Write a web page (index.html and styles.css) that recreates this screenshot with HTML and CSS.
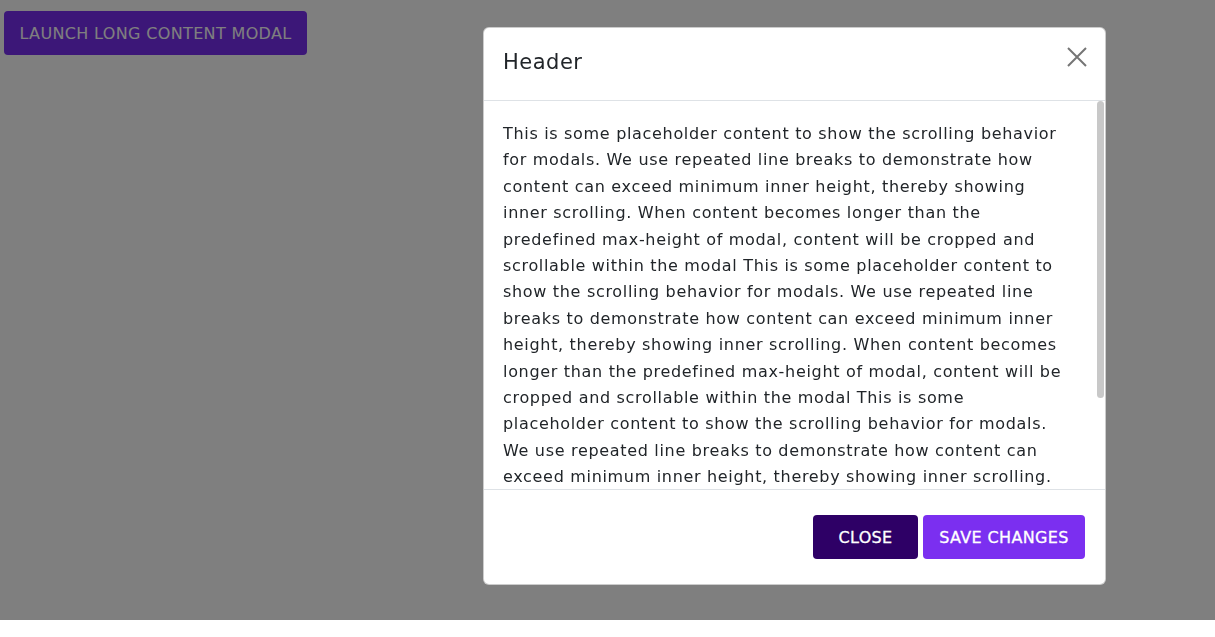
FILE: index.html
```html
<!DOCTYPE html>
<html lang="en">
<head>
<meta charset="utf-8">
<title>Long content modal</title>
<link rel="stylesheet" href="styles.css">
</head>
<body>
<div class="page">
  <button class="btn btn-launch" type="button">Launch long content modal</button>
</div>
<div class="backdrop">
  <div class="modal">
    <div class="modal-header">
      <h5 class="modal-title">Header</h5>
      <button class="btn-close" type="button" aria-label="Close">
        <svg width="20" height="20" viewBox="0 0 20 20"><path d="M1 1 L19 19 M19 1 L1 19" stroke="#757575" stroke-width="2" fill="none"/></svg>
      </button>
    </div>
    <div class="modal-body-wrap">
      <div class="modal-body">
        <p>This is some placeholder content to show the scrolling behavior for modals. We use repeated line breaks to demonstrate how content can exceed minimum inner height, thereby showing inner scrolling. When content becomes longer than the predefined max-height of modal, content will be cropped and scrollable within the modal This is some placeholder content to show the scrolling behavior for modals. We use repeated line breaks to demonstrate how content can exceed minimum inner height, thereby showing inner scrolling. When content becomes longer than the predefined max-height of modal, content will be cropped and scrollable within the modal This is some placeholder content to show the scrolling behavior for modals. We use repeated line breaks to demonstrate how content can exceed minimum inner height, thereby showing inner scrolling. When content becomes longer than the predefined max-height of modal, content will be cropped and scrollable within the modal</p>
      </div>
      <div class="scroll-thumb" aria-hidden="true"></div>
    </div>
    <div class="modal-footer">
      <button class="btn btn-close-modal" type="button">Close</button>
      <button class="btn btn-save" type="button">Save changes</button>
    </div>
  </div>
</div>
</body>
</html>
```
FILE: styles.css
```css
* { box-sizing: border-box; }
html, body { margin: 0; padding: 0; }
body {
  background: #ffffff;
  font-family: "DejaVu Sans", "Liberation Sans", sans-serif;
  color: #212529;
  height: 637px;
  overflow: hidden;
}
.page {
  padding: 11px 4px;
}
.btn {
  font-family: inherit;
  font-size: 16px;
  letter-spacing: 0.35px;
  text-transform: uppercase;
  border: 0;
  border-radius: 4px;
  height: 44px;
  color: #ffffff;
  cursor: pointer;
  padding: 0;
}
.btn-launch {
  width: 303px;
  background: #782ef0;
  font-weight: 400;
}
.backdrop {
  position: fixed;
  top: 0;
  left: 0;
  width: 100%;
  height: 620px;
  background: rgba(0, 0, 0, 0.5);
  padding: 27px 109px 35px 483px;
}
.modal {
  width: 623px;
  height: 558px;
  background: #ffffff;
  border: 1px solid rgba(0, 0, 0, 0.2);
  border-radius: 6px;
  display: flex;
  flex-direction: column;
  overflow: hidden;
}
.modal-header {
  height: 73px;
  flex: none;
  display: flex;
  align-items: center;
  justify-content: space-between;
  padding: 0 18px 4px 19px;
  border-bottom: 1px solid #dee2e6;
}
.modal-title {
  margin: 0;
  font-size: 21px;
  letter-spacing: 0.5px;
  font-weight: 400;
  color: #212529;
}
.btn-close {
  border: 0;
  background: transparent;
  padding: 0;
  width: 20px;
  height: 20px;
  margin-top: -10px;
  cursor: pointer;
}
.btn-close svg { display: block; }
.modal-body-wrap {
  flex: 1;
  min-height: 0;
  position: relative;
  display: flex;
}
.modal-body {
  flex: 1;
  overflow-y: auto;
  scrollbar-width: none;
  padding: 20px 0 20px 19px;
}
.modal-body::-webkit-scrollbar { display: none; }
.modal-body p {
  margin: 0;
  width: 566px;
  font-size: 16px;
  letter-spacing: 0.68px;
  line-height: 26.4px;
}
.scroll-thumb {
  position: absolute;
  top: 0;
  right: 1px;
  width: 7px;
  height: 297px;
  border-radius: 4px;
  background: #c8c8c8;
}
.modal-footer {
  height: 95px;
  flex: none;
  display: flex;
  align-items: center;
  justify-content: flex-end;
  gap: 5px;
  padding: 0 20px;
  border-top: 1px solid #dee2e6;
}
.btn-close-modal,
.btn-save {
  -webkit-text-stroke: 0.3px #ffffff;
}
.btn-close-modal {
  width: 105px;
  background: #2e0066;
}
.btn-save {
  width: 162px;
  background: #7b2ff0;
}
```
